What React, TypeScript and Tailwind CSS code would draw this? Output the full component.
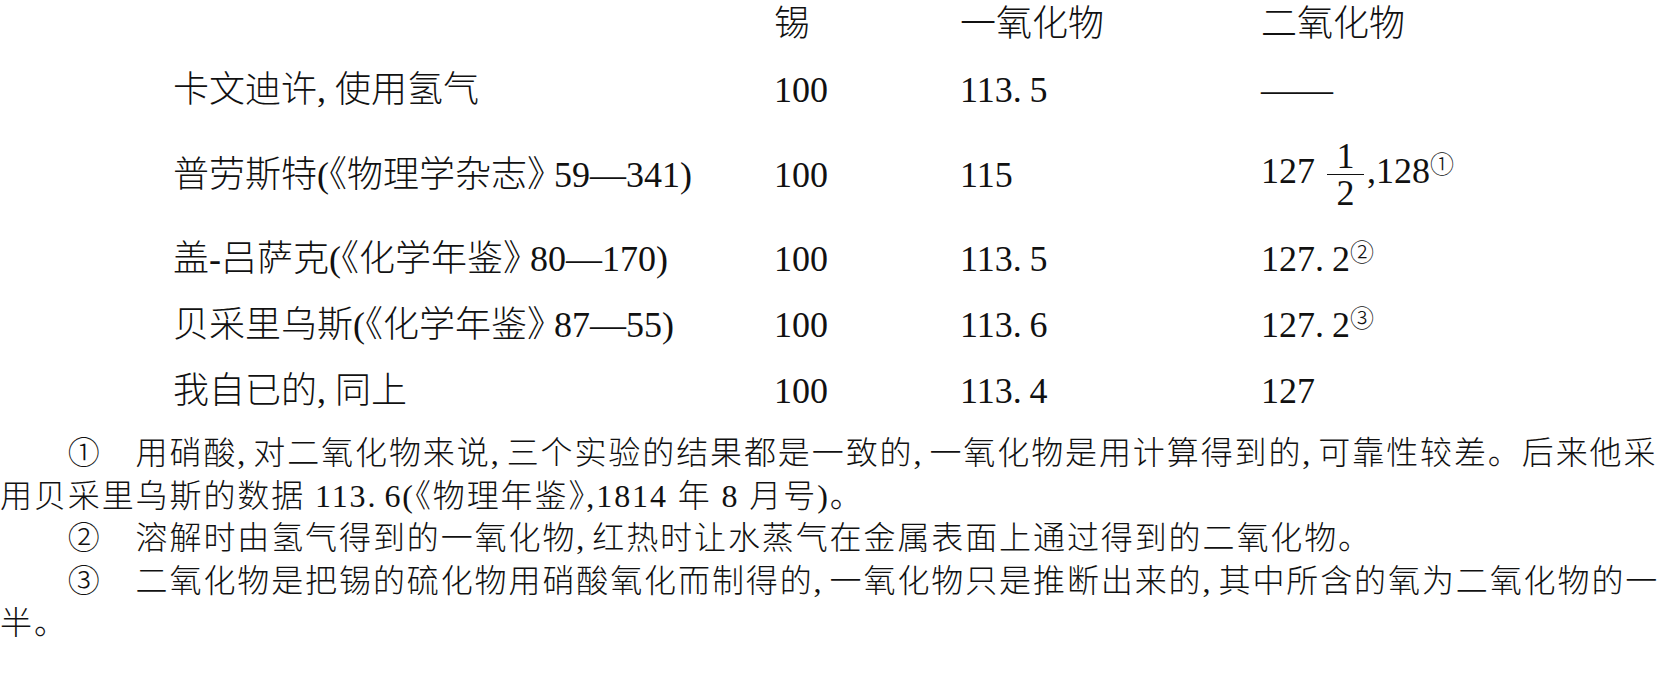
import type { ReactNode } from 'react'

function Comma() {
  return <span className="inline-block w-[0.5em] indent-0">,</span>
}

function Dot() {
  return <span className="mr-[0.22em]">.</span>
}

// closing book-title mark, narrowed the way the typesetter set it
function Rq({ tight }: { tight?: boolean }) {
  return (
    <span className={tight ? "[font-feature-settings:'halt']" : "mr-[0.25em] [font-feature-settings:'halt']"}>
      》
    </span>
  )
}

function Note({ n }: { n: string }) {
  return <sup className="-top-[0.4em] text-[24px]">{n}</sup>
}

function Half() {
  return (
    <span className="mx-[3px] inline-flex flex-col items-center indent-0 align-middle leading-[36px]">
      <span>1</span>
      <span className="w-[37px] border-t-[1.5px] border-[#111]" />
      <span>2</span>
    </span>
  )
}

type Row = {
  source: ReactNode
  tin: string
  oxide: ReactNode
  dioxide: ReactNode
}

const rows: Row[] = [
  {
    source: (
      <>
        卡文迪许<Comma />使用氢气
      </>
    ),
    tin: '100',
    oxide: (
      <>
        113<Dot />5
      </>
    ),
    dioxide: '——',
  },
  {
    source: (
      <>
        普劳斯特(《物理学杂志<Rq />59—341)
      </>
    ),
    tin: '100',
    oxide: '115',
    dioxide: (
      <>
        127 <Half />,128<Note n="①" />
      </>
    ),
  },
  {
    source: (
      <>
        盖-吕萨克(《化学年鉴<Rq />80—170)
      </>
    ),
    tin: '100',
    oxide: (
      <>
        113<Dot />5
      </>
    ),
    dioxide: (
      <>
        127<Dot />2<Note n="②" />
      </>
    ),
  },
  {
    source: (
      <>
        贝采里乌斯(《化学年鉴<Rq />87—55)
      </>
    ),
    tin: '100',
    oxide: (
      <>
        113<Dot />6
      </>
    ),
    dioxide: (
      <>
        127<Dot />2<Note n="③" />
      </>
    ),
  },
  {
    source: (
      <>
        我自已的<Comma />同上
      </>
    ),
    tin: '100',
    oxide: (
      <>
        113<Dot />4
      </>
    ),
    dioxide: '127',
  },
]

export default function App() {
  return (
    <div className="h-[676px] w-[1664px] overflow-hidden bg-white font-['Liberation_Serif','Noto_Sans_CJK_SC',serif] font-light text-[#111]">
      {/* table */}
      <div className="grid grid-cols-[601px_186px_301px_1fr] items-center gap-y-[30px] pl-[173px] pt-[6px] text-[36px] leading-[36px] whitespace-nowrap">
        <div />
        <div>锡</div>
        <div>一氧化物</div>
        <div>二氧化物</div>
        {rows.map((row, i) => (
          <div key={i} className="contents">
            <div>{row.source}</div>
            <div>{row.tin}</div>
            <div>{row.oxide}</div>
            <div>{row.dioxide}</div>
          </div>
        ))}
      </div>

      {/* footnotes */}
      <div className="mt-[23px] text-[32px] leading-[42.5px] tracking-[1.9px] whitespace-nowrap">
        <p className="indent-[67.8px]">
          ①　用硝酸<Comma />对二氧化物来说<Comma />三个实验的结果都是一致的<Comma />
          一氧化物是用计算得到的<Comma />可靠性较差。后来他采
          <br />
          用贝采里乌斯的数据 113<Dot />6(《物理年鉴<Rq tight />,1814 年 8 月号)。
        </p>
        <p className="indent-[67.8px]">
          ②　溶解时由氢气得到的一氧化物<Comma />红热时让水蒸气在金属表面上通过得到的二氧化物。
        </p>
        <p className="indent-[67.8px]">
          ③　二氧化物是把锡的硫化物用硝酸氧化而制得的<Comma />一氧化物只是推断出来的<Comma />
          其中所含的氧为二氧化物的一
          <br />
          半。
        </p>
      </div>
    </div>
  )
}
